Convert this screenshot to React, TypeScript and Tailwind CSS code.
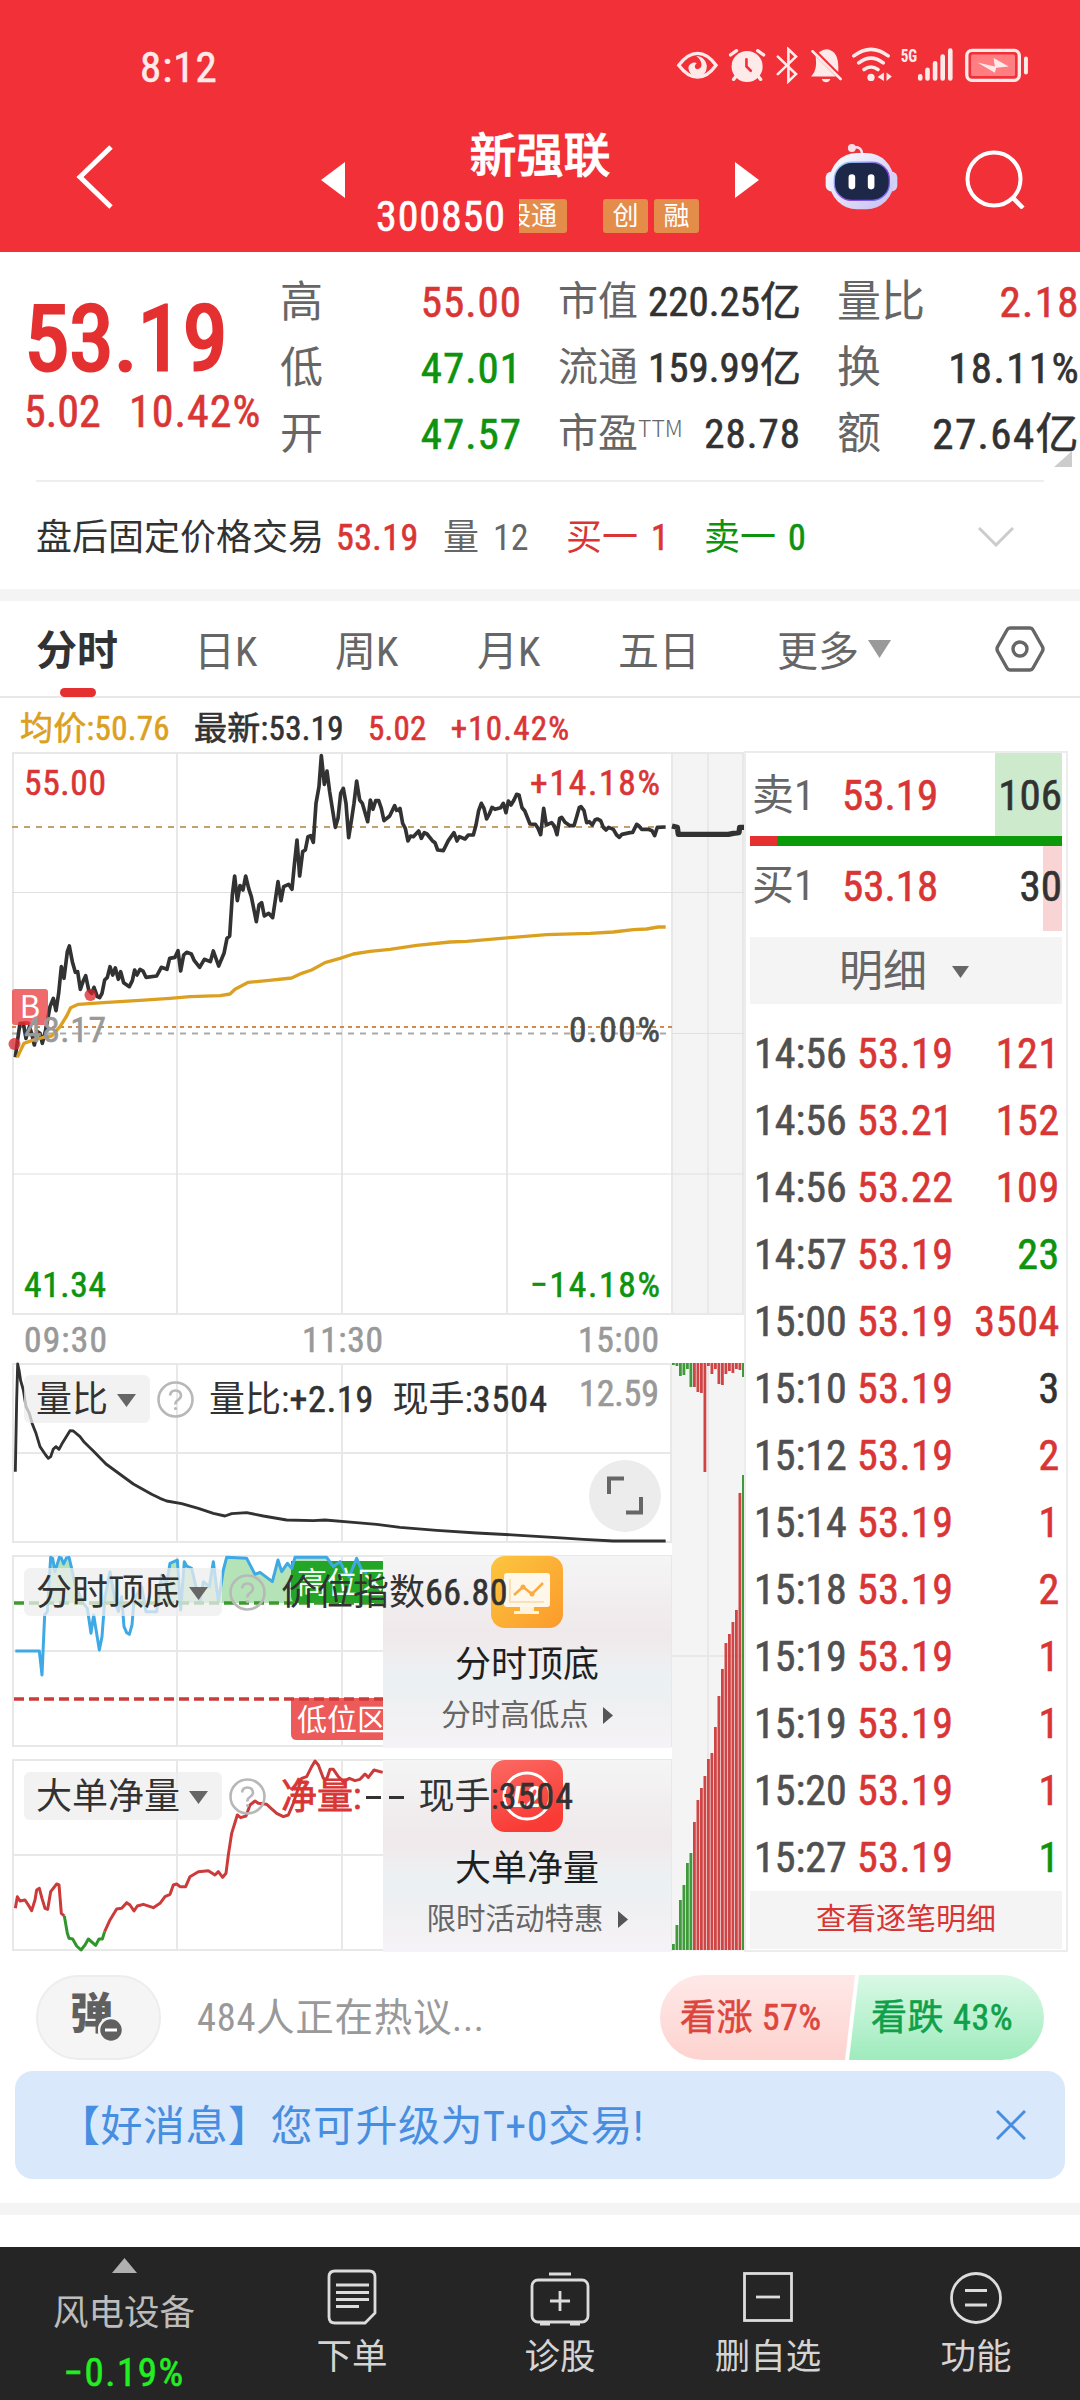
import type { ReactNode } from "react";

const STATS = [
  ["高", "55.00", "text-[#d93535]", "市值", "220.25亿", "量比", "2.18", "text-[#d93535]"],
  ["低", "47.01", "text-[#0d930d]", "流通", "159.99亿", "换", "18.11%", "text-[#323232]"],
  ["开", "47.57", "text-[#0d930d]", "市盈", "28.78", "额", "27.64亿", "text-[#323232]"],
];

const TRADES = [
  ["14:56", "53.19", "121", "r"],
  ["14:56", "53.21", "152", "r"],
  ["14:56", "53.22", "109", "r"],
  ["14:57", "53.19", "23", "g"],
  ["15:00", "53.19", "3504", "r"],
  ["15:10", "53.19", "3", "k"],
  ["15:12", "53.19", "2", "r"],
  ["15:14", "53.19", "1", "r"],
  ["15:18", "53.19", "2", "r"],
  ["15:19", "53.19", "1", "r"],
  ["15:19", "53.19", "1", "r"],
  ["15:20", "53.19", "1", "r"],
  ["15:27", "53.19", "1", "g"],
];

const QTY_COLOR: Record<string, string> = {
  r: "text-[#d93535]",
  g: "text-[#0d930d]",
  k: "text-[#323232]",
};

// Series are stored at 3x, each chart scales them down.
const PRICE_AM =
  "46,952 52,905 60,850 70,850 78,895 88,860 95,880 103,915 112,875 120,880 127,910 137,870 150,800 160,775 168,812 176,760 184,680 192,715 202,635 208,618 217,665 226,697 233,695 241,748 250,722 257,707 266,750 275,760 282,742 292,770 299,773 306,760 314,720 322,712 330,680 338,705 346,684 355,718 362,695 371,728 388,740 397,722 404,690 411,705 420,688 429,693 438,712 470,708 484,682 501,688 509,655 525,652 534,632 542,693 551,645 560,637 574,642 583,662 599,682 613,658 631,665 640,633 656,678 672,640 681,595 689,588 697,465 704,408 712,482 720,437 729,450 737,408 746,445 754,470 769,545 777,495 785,488 793,528 806,520 818,533 826,480 834,425 843,482 851,440 866,433 876,448 883,375 891,300 899,408 908,335 916,330 924,290 932,287 940,307 948,190 957,140 964,47 973,133 981,93 989,155 1006,262 1014,235 1022,160 1030,145 1038,190 1046,293 1056,230 1062,190 1070,123 1079,180 1087,190 1103,245 1111,180 1119,208 1127,182 1136,182 1144,205 1152,242 1169,228 1184,197 1192,215";
const PRICE_PM =
  "1192,215 1200,205 1208,250 1216,265 1224,303 1232,288 1240,290 1256,273 1264,295 1273,278 1281,282 1297,302 1305,308 1313,330 1330,332 1345,302 1362,278 1371,303 1378,290 1395,297 1405,285 1420,285 1428,255 1436,212 1444,190 1452,205 1460,237 1468,222 1476,202 1485,208 1502,203 1510,190 1518,218 1525,183 1533,195 1542,180 1550,163 1557,165 1566,203 1574,212 1590,252 1606,253 1614,265 1622,284 1631,205 1639,255 1655,248 1663,258 1671,284 1679,235 1685,232 1695,247 1710,257 1722,257 1730,230 1738,202 1743,200 1752,212 1760,248 1768,245 1777,255 1785,240 1792,237 1802,242 1810,262 1818,270 1826,262 1840,268 1850,285 1858,292 1866,283 1890,278 1898,277 1910,253 1917,258 1925,268 1945,268 1956,272 1964,287 1972,262 1997,261";
const AFTER_HOURS = "2016,258 2032,262 2035,283 2185,283 2200,280 2217,278 2219,262 2232,262";
const AVERAGE =
  "52,952 60,935 72,910 100,900 140,890 155,888 180,860 200,828 212,803 235,793 310,788 420,781 510,775 570,770 660,767 690,762 705,748 745,727 800,722 875,714 905,700 935,690 975,668 1020,655 1060,642 1110,634 1170,628 1250,616 1350,606 1400,604 1540,592 1640,584 1770,580 1840,576 1900,569 1940,567 1975,561 1997,561";
const RATIO =
  "46,365 50,150 53,42 57,60 62,92 70,120 78,170 88,190 97,222 108,250 120,290 137,315 145,325 152,320 160,297 168,290 177,298 185,283 210,242 220,243 240,260 253,277 280,303 318,342 400,402 455,433 480,445 500,453 545,461 595,475 640,490 675,498 695,491 740,488 790,498 860,510 940,512 975,510 1060,517 1130,523 1200,532 1310,541 1430,549 1560,556 1670,563 1750,568 1840,573 1997,573";
const INDEX =
  "46,333 118,333 126,405 134,225 142,215 152,52 158,55 165,95 178,52 184,54 191,72 199,54 207,52 215,85 225,135 250,190 262,205 273,280 281,225 298,330 306,290 315,170 330,95 345,180 355,215 365,170 372,260 380,278 388,283 396,255 402,180 410,165 425,140 438,215 470,215 485,105 500,130 510,70 532,60 542,210 553,65 560,78 575,85 590,150 600,182 610,125 628,140 640,65 655,185 670,90 680,52 740,55 765,103 780,97 817,125 834,60 845,95 862,70 875,85 885,52 980,52 1000,80 1020,65 1035,95 1048,110 1070,55 1085,90 1100,100";
const NET_A =
  "46,1105 52,1070 60,1083 75,1080 85,1095 95,1112 105,1080 110,1050 118,1045 126,1075 135,1105 143,1108 152,1055 170,1032 177,1035 184,1120 193,1128";
const NET_B = "193,1128 202,1180 207,1195 218,1197 230,1218 243,1230 255,1215 265,1197 287,1216 297,1197 307,1197 314,1175";
const NET_C =
  "314,1175 330,1140 350,1107 365,1105 380,1088 390,1095 402,1113 412,1098 430,1093 460,1103 480,1090 495,1070 510,1063 520,1035 530,1032 540,1040 557,1040 570,1010 595,995 625,992 645,1005 655,995 668,1012 678,1000 685,945 695,880 712,825 722,833 738,828 750,795 765,783 775,790 800,793 830,820 850,830 865,825 880,790 895,745 905,715 920,710 935,680 945,663 955,675 970,715 980,718 990,688 1000,688 1015,710 1030,725 1048,715 1065,722 1080,718 1095,702 1105,712 1122,690 1148,697";

const BARS_TOP = [2, 3, 13, 12, 6, 24, 24, 29, 30, 109, 3, 11, 6, 21, 22, 11, 8, 10, 6, 7, 14];
const BARS_BOTTOM = [6, 25, 50, 65, 87, 97, 128, 150, 162, 174, 191, 197, 223, 254, 281, 307, 316, 328, 340, 457, 475];

const NUM = "[-webkit-text-stroke:0.6px]";

function StatusBar() {
  return (
    <div className="flex h-[134px] items-center justify-between pr-[50px] pl-[140px] text-[#ffeaea]">
      <span className="text-[43px] leading-none tracking-[1px] [-webkit-text-stroke:0.6px]">8:12</span>
      <svg width="355" height="37" viewBox="46 33 1066 112" className="-mt-1" fill="none" stroke="#ffeaea" strokeWidth="10" strokeLinecap="round">
        <path d="M53 88 Q80 52 110 52 T166 88 Q140 124 110 124 T53 88Z" />
        <path d="M106 60 C126 74 128 100 108 100 C98 96 102 86 108 82 C98 76 84 84 82 96 C84 114 98 124 110 124 C130 122 138 108 138 90 C136 72 122 60 106 60Z" fill="#ffeaea" stroke="none" />
        <circle cx="260" cy="92" r="47" fill="#ffeaea" stroke="none" />
        <path d="M210 57 L228 44 M310 57 L292 44 M226 122 L219 131 M294 122 L301 131" />
        <path d="M258 70 V92 L271 105" stroke="#f13038" strokeWidth="8" />
        <path d="M353 62 L408 115 L385 137 V40 L408 62 L353 115" strokeWidth="8" />
        <path d="M480 50 Q498 36 514 46 Q536 56 534 104 L480 50 M470 66 L524 120 H458 Q474 104 470 66Z" fill="#ffeaea" strokeWidth="4" />
        <path d="M458 46 L543 130" strokeWidth="8" />
        <path d="M486 130 H512 Q508 140 499 140 Q490 140 486 130Z" fill="#ffeaea" stroke="none" />
        <path d="M583 60 Q635 20 687 60 M598 81 Q635 52 672 81 M614 101 Q635 86 656 101" strokeWidth="11" />
        <circle cx="635" cy="125" r="11" fill="#ffeaea" stroke="none" />
        <path d="M655 124 L674 110 V136Z M682 110 L698 122 L682 136Z" fill="#ffeaea" stroke="none" />
        <text x="725" y="79" fontSize="58" fontWeight="700" textLength="50" lengthAdjust="spacingAndGlyphs" fill="#ffeaea" stroke="none">5G</text>
        <path d="M784 122 V128 M806 102 V128 M829 82 V128 M852 62 V128 M875 44 V128" strokeWidth="14" />
        <rect x="925" y="43" width="159" height="91" rx="16" />
        <rect x="938" y="56" width="133" height="65" rx="5" fill="#ff7e82" stroke="none" />
        <path d="M957 80 L1010 92 L1006 66 L1052 92 L1014 96 L1010 111Z" fill="#ffeaea" stroke="none" />
        <path d="M1104 68 V110" strokeWidth="12" />
      </svg>
    </div>
  );
}

function Robot() {
  return (
    <svg width="73" height="67" viewBox="494 322 218 202" className="mt-[9px] ml-[66px]">
      <defs>
        <linearGradient id="shell" x1="0" y1="0" x2="1" y2="1">
          <stop offset="0" stopColor="#ffffff" />
          <stop offset="1" stopColor="#c3bdf3" />
        </linearGradient>
        <linearGradient id="rim" x1="0" y1="0" x2="1" y2="1">
          <stop offset="0" stopColor="#8fe3f5" />
          <stop offset="0.6" stopColor="#8a3fe0" />
          <stop offset="1" stopColor="#6c7bf0" />
        </linearGradient>
      </defs>
      <path d="M574 337 Q604 328 605 358" fill="none" stroke="#f3ddf0" strokeWidth="8" />
      <circle cx="574" cy="337" r="12" fill="#f7dfe9" />
      <rect x="495" y="408" width="40" height="60" rx="18" fill="#eef0fb" />
      <rect x="671" y="408" width="40" height="60" rx="18" fill="#d5d0f5" />
      <rect x="507" y="352" width="193" height="170" rx="82" fill="url(#shell)" />
      <rect x="521" y="380" width="166" height="115" rx="52" fill="#1d2747" stroke="url(#rim)" strokeWidth="4" />
      <rect x="564" y="416" width="20" height="46" rx="10" fill="#fff" />
      <rect x="622" y="416" width="20" height="46" rx="10" fill="#fff" />
    </svg>
  );
}

function Header() {
  return (
    <header className="h-[252px] bg-[#f13038] text-white">
      <StatusBar />
      <div className="flex h-[118px] items-start pl-[76px]">
        <svg width="37" height="64" viewBox="0 0 37 64" className="mt-[11px]" fill="none" stroke="#fff" strokeWidth="5">
          <path d="M35 2 L4 32 L35 62" />
        </svg>
        <svg width="24" height="36" viewBox="0 0 24 36" className="mt-[28px] ml-[208px]">
          <path d="M24 0 V36 L0 18Z" fill="#fff" />
        </svg>
        <div className="w-[390px]">
          <h1 className="-mt-[2px] text-center text-[47px] leading-[48px] font-medium [-webkit-text-stroke:0.8px]">新强联</h1>
          <div className="mt-[19px] flex h-[34px] items-center pl-[31px]">
            <span className={`w-[143px] pt-[2px] text-[42px] leading-none tracking-[0.9px] ${NUM}`}>300850</span>
            <span className="flex h-[34px] w-[48px] justify-end overflow-hidden rounded-r-[3px] bg-[#e48c4a] pr-[10px] text-[26px] leading-[34px] whitespace-nowrap">股通</span>
            <span className="ml-[36px] h-[34px] w-[45px] rounded-[3px] bg-[#e48c4a] text-center text-[26px] leading-[34px]">创</span>
            <span className="ml-[6px] h-[34px] w-[45px] rounded-[3px] bg-[#e48c4a] text-center text-[26px] leading-[34px]">融</span>
          </div>
        </div>
        <svg width="24" height="36" viewBox="0 0 24 36" className="mt-[28px]">
          <path d="M0 0 V36 L24 18Z" fill="#fff" />
        </svg>
        <Robot />
        <svg width="60" height="60" viewBox="0 0 60 60" className="mt-[15px] ml-[67px]" fill="none" stroke="#fff" strokeWidth="4">
          <circle cx="29" cy="30" r="26.500" />
          <path d="M47 48 L58 59" strokeWidth="4.500" />
        </svg>
      </div>
    </header>
  );
}

function Quote() {
  return (
    <section className="relative flex h-[228px] text-[#d93535]">
      <div className="w-[280px] shrink-0 pt-[41px] pl-[24px]">
        <div className="text-[91px] leading-[92px] text-[#e43030] [-webkit-text-stroke:3px]">53.19</div>
        <div className={`mt-[5px] flex text-[44px] leading-[44px] ${NUM}`}>
          <span className="w-[105px]">5.02</span>
          <span className="tracking-[1px]">10.42%</span>
        </div>
      </div>
      <div className="w-[800px] pt-[17px]">
        {STATS.map(([a, av, ac, b, bv, c, cv, cc]) => (
          <div key={a} className="flex h-[66px] items-center text-[43px] leading-none whitespace-nowrap">
            <span className="text-[#666]">{a}</span>
            <span className={`ml-auto tracking-[1px] ${NUM} ${ac}`}>{av}</span>
            <span className="ml-[36px] flex w-[243px] items-center text-[40px] text-[#666]">
              {b}
              {b === "市盈" && <span className="-mt-[14px] font-['Noto_Sans_CJK_SC'] text-[23px] font-light">TTM</span>}
              <span className={`ml-auto text-[41px] text-[#323232] ${b === "市盈" ? "tracking-[1px]" : ""} ${NUM}`}>{bv}</span>
            </span>
            <span className="ml-[36px] w-[100px] text-[44px] text-[#666]">{c}</span>
            <span className={`flex w-[143px] justify-end tracking-[1.4px] ${NUM} ${cc}`}>{cv}</span>
          </div>
        ))}
      </div>
      <svg width="18" height="16" viewBox="0 0 18 16" className="absolute top-[199px] right-[8px]">
        <path d="M18 0 V16 H0Z" fill="#ccc" />
      </svg>
    </section>
  );
}

function AfterHours() {
  return (
    <section className="mx-[36px] flex h-[109px] items-center border-t-2 border-[#eee] pt-[5px] text-[36px] leading-none">
      <span className="w-[300px] text-[#323232]">盘后固定价格交易</span>
      <span className={`w-[107px] tracking-[0.4px] text-[#d93535] ${NUM}`}>53.19</span>
      <span className="w-[50px] text-[#666]">量</span>
      <span className="w-[73px] text-[#666]">12</span>
      <span className="w-[85px] text-[#d93535]">买一</span>
      <span className={`w-[53px] text-[#d93535] ${NUM}`}>1</span>
      <span className="w-[84px] text-[#0d930d]">卖一</span>
      <span className={`text-[#0d930d] ${NUM}`}>0</span>
      <svg width="36" height="20" viewBox="0 0 36 20" className="mr-[30px] -mt-[3px] ml-auto" fill="none" stroke="#ccc" strokeWidth="3">
        <path d="M1 1 L18 18 L35 1" />
      </svg>
    </section>
  );
}

function Tabs() {
  return (
    <nav className="flex h-[97px] items-start border-b-2 border-[#e8e8e8] pl-[36px] text-[41px] leading-none text-[#666]">
      <div className="w-[158px]">
        <div className="mt-[30px] font-bold text-[#323232]">分时</div>
        <div className="mt-[16px] ml-[24px] h-[9px] w-[36px] rounded-full bg-[#e43030]" />
      </div>
      <span className="mt-[31px] w-[141px]">日K</span>
      <span className="mt-[31px] w-[142px]">周K</span>
      <span className="mt-[31px] w-[141px]">月K</span>
      <span className="mt-[31px] w-[159px]">五日</span>
      <span className="mt-[31px] w-[91px]">更多</span>
      <svg width="23" height="18" viewBox="0 0 23 18" className="mt-[39px]">
        <path d="M0 0 H23 L11.500 18Z" fill="#999" />
      </svg>
      <svg width="50" height="50" viewBox="0 0 50 50" className="mt-[23px] ml-[104px]" fill="none" stroke="#666" strokeWidth="3.400" strokeLinejoin="round">
        <path d="M15 4 H35 Q37 4 38 6 L47 22 Q49 25 47 28 L38 44 Q37 46 35 46 H15 Q13 46 12 44 L3 28 Q1 25 3 22 L12 6 Q13 4 15 4Z" />
        <circle cx="25" cy="25" r="7" />
      </svg>
    </nav>
  );
}

function Legend() {
  return (
    <div className={`flex h-[52px] items-center gap-[24px] pt-[8px] pl-[20px] text-[33px] leading-none tracking-[0.3px] text-[#d93535] ${NUM}`}>
      <span className="text-[#dca020]">均价:50.76</span>
      <span className="text-[#323232]">最新:53.19</span>
      <span>5.02</span>
      <span className="tracking-[1.2px]">+10.42%</span>
    </div>
  );
}

const VERTICALS = [13, 177, 342, 507];

function PriceChart() {
  return (
    <svg width="745" height="610" viewBox="0 0 745 610" className="block">
      <rect x="671" y="3" width="73" height="562" fill="#f4f4f4" />
      <g stroke="#e8e8e8" strokeWidth="2">
        {VERTICALS.map((x) => (
          <path key={x} d={`M${x} 3 V565`} />
        ))}
        <path d="M672 3 V565 M708 3 V565 M743 3 V565 M12 3 H744 M12 564 H744" />
        <path d="M12 142.500 H744 M12 424 H744 M672 283.500 H744" stroke="#e0e0e0" strokeWidth="1.200" />
      </g>
      <path d="M12 77 H664" stroke="#c4a06c" strokeWidth="2" strokeDasharray="6 6" />
      <path d="M12 277 H672" stroke="#d08a4a" strokeWidth="2" strokeDasharray="4 4" />
      <path d="M12 283.500 H666" stroke="#aaa" strokeWidth="2" strokeDasharray="6 6" />
      <g fill="none" strokeLinejoin="round" transform="translate(0 -10) scale(.33333)">
        <polyline points={PRICE_AM} stroke="#323232" strokeWidth="11" />
        <polyline points={PRICE_PM} stroke="#323232" strokeWidth="11" />
        <polyline points={AFTER_HOURS} stroke="#323232" strokeWidth="16" />
        <polyline points={AVERAGE} stroke="#dca020" strokeWidth="10" />
      </g>
      <rect x="12" y="239" width="36" height="36" rx="3" fill="#e93a3a" opacity="0.75" />
      <text x="30" y="268" fontSize="31" textAnchor="middle" fill="#fff" className="font-['Noto_Sans_CJK_SC']">B</text>
      <g fill="#d9222b" opacity="0.75">
        <circle cx="14.500" cy="294" r="6" />
        <circle cx="90.500" cy="245" r="6" />
        <path d="M20 275 Q26 267 33 275Z" />
      </g>
      <g fontSize="35.500" strokeWidth="0.600">
        <text x="24" y="45" textLength="82" fill="#d93535" stroke="#d93535">55.00</text>
        <text x="530" y="45" textLength="130" fill="#d93535" stroke="#d93535">+14.18%</text>
        <text x="24" y="292" textLength="82" fill="#999" stroke="#999">48.17</text>
        <text x="569" y="292" textLength="91" fill="#4a4a4a" stroke="#4a4a4a">0.00%</text>
        <text x="24" y="547" textLength="82" fill="#0d930d" stroke="#0d930d">41.34</text>
        <text x="530" y="547" textLength="130" fill="#0d930d" stroke="#0d930d">−14.18%</text>
        <text x="24" y="602" textLength="83" fill="#999" stroke="#999">09:30</text>
        <text x="302" y="602" textLength="81" fill="#999" stroke="#999">11:30</text>
        <text x="578" y="602" textLength="81" fill="#999" stroke="#999">15:00</text>
      </g>
    </svg>
  );
}

function Grid({ top, mid, bottom }: { top: number; mid: number; bottom: number }) {
  return (
    <g stroke="#e8e8e8" strokeWidth="2">
      {VERTICALS.map((x) => (
        <path key={x} d={`M${x} ${top} V${bottom}`} />
      ))}
      <path d={`M12 ${top} H672 M12 ${mid} H672 M12 ${bottom} H672 M671 ${top} V${bottom}`} />
    </g>
  );
}

function PanelLabel({ name, children }: { name: string; children: ReactNode }) {
  return (
    <div className="absolute top-[15px] left-[24px] flex items-center text-[36px] leading-none whitespace-nowrap text-[#323232]">
      <div className="flex h-[48px] items-center gap-[9px] rounded-[6px] bg-[#eee]/75 pt-[2px] pr-[14px] pl-[12px]">
        {name}
        <svg width="19" height="13" viewBox="0 0 19 13">
          <path d="M0 0 H19 L9.500 13Z" fill="#666" />
        </svg>
      </div>
      <svg width="37" height="37" viewBox="0 0 37 37" className="mr-[15px] ml-[7px]" fill="none" stroke="#b8b8b8" strokeWidth="2.600">
        <circle cx="18.500" cy="18.500" r="17" />
        <path d="M13 14.500 Q13.500 9.500 18.500 9.500 T24 14.500 Q24 17 21 19 T18.500 23.500" />
        <circle cx="18.500" cy="27.500" r="1" fill="#b8b8b8" strokeWidth="1.200" />
      </svg>
      <div className="flex items-center pt-[2px]">{children}</div>
    </div>
  );
}

function Promo({ title, sub, top, children }: { title: string; sub: string; top: string; children: ReactNode }) {
  return (
    <div
      className={`absolute left-[383px] flex h-[192px] w-[288px] flex-col items-center bg-linear-to-b from-[#f5f5f6] via-[#efe9eb] via-40% to-[#f5f3f7] ${top}`}
    >
      <div className="absolute inset-0 bg-linear-to-b from-transparent from-45% via-[#ebf1f3] via-65% to-transparent to-90%" />
      <svg width="72" height="72" viewBox="0 0 72 72" className="relative -ml-px">
        {children}
      </svg>
      <div className="relative mt-[19px] text-[36px] leading-[36px] text-[#1f1f1f]">{title}</div>
      <div className="relative mt-[16px] flex items-center gap-[14px] text-[29.500px] leading-[32px] text-[#666]">
        {sub}
        <svg width="10" height="17" viewBox="0 0 10 17">
          <path d="M0 0 L10 8.500 L0 17Z" fill="#555" />
        </svg>
      </div>
    </div>
  );
}

function RatioPanel() {
  return (
    <div className="relative h-[193px]">
      <svg width="672" height="193" viewBox="0 0 672 193" className="block">
        <Grid top={4} mid={93} bottom={182} />
        <polyline points={RATIO} transform="translate(0 -10) scale(.33333)" fill="none" stroke="#323232" strokeWidth="8.500" strokeLinejoin="round" />
        <circle cx="625" cy="136" r="36" fill="#ececec" />
        <path d="M609 134 V118.500 H624 M626 152.500 H641 V137" fill="none" stroke="#666" strokeWidth="4" />
        <text x="579" y="46" fontSize="36" textLength="80" fill="#999" stroke="#999" strokeWidth="0.600">12.59</text>
      </svg>
      <PanelLabel name="量比">
        <span>量比:</span>
        <span className={`w-[103px] tracking-[0.8px] ${NUM}`}>+2.19</span>
        <span>现手:</span>
        <span className={`tracking-[1px] ${NUM}`}>3504</span>
      </PanelLabel>
    </div>
  );
}

function TopBottomPanel() {
  return (
    <div className="relative h-[204px]">
      <svg width="672" height="204" viewBox="0 0 672 204" className="block">
        <defs>
          <clipPath id="above-high">
            <rect x="0" y="0" width="383" height="50" />
          </clipPath>
          <clipPath id="left-part">
            <rect x="0" y="0" width="383" height="204" />
          </clipPath>
        </defs>
        <Grid top={3} mid={98} bottom={193} />
        <g clipPath="url(#above-high)">
          <polygon points={`46,189 ${INDEX} 1100,189`} transform="translate(0 -13) scale(.33333)" fill="#b5e3b8" />
        </g>
        <g clipPath="url(#left-part)">
          <path d="M291 8 H383 V50 H298 Q291 50 291 43Z" fill="#23a527" />
          <polyline points={INDEX} transform="translate(0 -13) scale(.33333)" fill="none" stroke="#3fa9e6" strokeWidth="9" strokeLinejoin="round" />
          <path d="M14 50 H383" stroke="#3f9a2c" strokeWidth="3.500" strokeDasharray="10 5" />
          <path d="M291 145 H390 V187 H297 Q291 187 291 181Z" fill="#ec5a5a" />
          <path d="M14 146 H383" stroke="#cc3a3a" strokeWidth="3.500" strokeDasharray="10 5" />
          <text x="297" y="40" fontSize="30" fill="#f4fff4">高位区</text>
          <text x="297" y="177" fontSize="30" fill="#fff">低位区</text>
        </g>
      </svg>
      <Promo title="分时顶底" sub="分时高低点" top="top-[3px]">
        <defs>
          <linearGradient id="orange" x1="0" y1="0" x2="1" y2="1">
            <stop offset="0" stopColor="#fcc63f" />
            <stop offset="1" stopColor="#fb9a2b" />
          </linearGradient>
        </defs>
        <rect width="72" height="72" rx="14" fill="url(#orange)" />
        <rect x="13" y="17" width="46" height="34" rx="3" fill="#fff8ea" />
        <path d="M29 51 H43 V55 H48 V58 H23 V55 H29Z" fill="#fff3dc" />
        <path d="M19 23 V46 H53" fill="none" stroke="#f9d9a8" strokeWidth="1.500" />
        <path d="M23 39 L32 31 L41 38 L52 27" fill="none" stroke="#fbab3f" strokeWidth="2.500" />
        <circle cx="32" cy="31" r="2.500" fill="#fbab3f" />
        <circle cx="41" cy="38" r="2.500" fill="#fbab3f" />
      </Promo>
      <PanelLabel name="分时顶底">
        <span>价位指数</span>
        <span className={`tracking-[0.5px] ${NUM}`}>66.80</span>
      </PanelLabel>
    </div>
  );
}

function NetPanel() {
  return (
    <div className="relative h-[195px]">
      <svg width="672" height="195" viewBox="0 0 672 195" className="block">
        <Grid top={3} mid={98} bottom={193} />
        <g fill="none" strokeWidth="9" strokeLinejoin="round" transform="translate(0 -217) scale(.33333)">
          <polyline points={NET_A} stroke="#cc3a3a" />
          <polyline points={NET_B} stroke="#2f962b" />
          <polyline points={NET_C} stroke="#cc3a3a" />
        </g>
      </svg>
      <Promo title="大单净量" sub="限时活动特惠" top="top-[3px]">
        <defs>
          <linearGradient id="red" x1="0" y1="0" x2="0.400" y2="1">
            <stop offset="0" stopColor="#fb6a63" />
            <stop offset="1" stopColor="#f93a35" />
          </linearGradient>
        </defs>
        <rect width="72" height="72" rx="14" fill="url(#red)" />
        <circle cx="36" cy="36" r="23" fill="none" stroke="#fff" strokeWidth="3" />
        <text x="36" y="47" fontSize="30" fontWeight="700" fontStyle="italic" textAnchor="middle" fill="#fff">L2</text>
      </Promo>
      <PanelLabel name="大单净量">
        <span className="text-[#d93535] [-webkit-text-stroke:0.8px]">净量:</span>
        <span className="flex w-[57px] gap-[8px] pl-[5px]">
          <i className="h-[3px] w-[15px] bg-[#323232]" />
          <i className="h-[3px] w-[15px] bg-[#323232]" />
        </span>
        <span>现手:</span>
        <span className={`tracking-[1px] ${NUM}`}>3504</span>
      </PanelLabel>
    </div>
  );
}

function barColor(i: number) {
  return i < 6 || i === 20 ? "#3f9a3a" : "#cf4444";
}

function AfterHoursBars() {
  return (
    <svg width="73" height="592" viewBox="0 0 73 592" className="block shrink-0">
      <rect y="3" width="73" height="588" fill="#f4f4f4" />
      <path d="M36 3 V591 M0 296 H73" stroke="#e4e4e4" strokeWidth="1.500" />
      {BARS_TOP.map((h, i) => (
        <rect key={i} x={i * 3.5} y="3" width="2.800" height={h} fill={barColor(i)} />
      ))}
      {BARS_BOTTOM.map((h, i) => (
        <rect key={i} x={i * 3.5} y={590 - h} width="2.800" height={h} fill={barColor(i)} />
      ))}
    </svg>
  );
}

function OrderPanel() {
  return (
    <aside className={`mt-px -ml-px h-[1201px] w-[324px] border-2 border-[#ececec] pr-[4px] pl-[4px] text-[42px] leading-none text-[#d93535] ${NUM}`}>
      <div className="flex h-[83px] items-center pl-[2px]">
        <span className="w-[90px] pt-[2px] text-[42px] text-[#666] [-webkit-text-stroke:0]">卖1</span>
        <span className="pt-[2px] text-[43px]">53.19</span>
        <span className="ml-auto flex h-[83px] w-[67px] items-center justify-end bg-[#cdeacd] pt-[2px] text-[43px] text-[#323232]">106</span>
      </div>
      <div className="flex h-[10px] bg-[#0a9a0a]">
        <div className="w-[27px] bg-[#e43030]" />
      </div>
      <div className="flex h-[85px] items-start pl-[2px]">
        <span className="mt-[19px] w-[90px] text-[42px] text-[#666] [-webkit-text-stroke:0]">买1</span>
        <span className="mt-[19px] text-[43px]">53.18</span>
        <span className="ml-auto flex h-[85px] w-[19px] justify-end bg-[#f9d4d4] pt-[19px] text-[43px] text-[#323232]">30</span>
      </div>
      <div className="mt-[6px] flex h-[67px] items-center justify-center gap-[25px] bg-[#f4f4f4] pt-[3px] pr-[4px] text-[44px] text-[#666] [-webkit-text-stroke:0]">
        明细
        <svg width="17" height="12" viewBox="0 0 17 12">
          <path d="M0 0 H17 L8.500 12Z" fill="#666" />
        </svg>
      </div>
      <div className="mt-[16px]">
        {TRADES.map(([time, price, qty, c], i) => (
          <div key={i} className="flex h-[67px] items-center pr-[2px] pl-[4px]">
            <span className="w-[103px] text-[#505050]">{time}</span>
            <span className="tracking-[0.5px]">{price}</span>
            <span className={`ml-auto tracking-[0.7px] ${QTY_COLOR[c]}`}>{qty}</span>
          </div>
        ))}
      </div>
      <div className="h-[58px] bg-[#f4f4f4] text-center text-[30px] leading-[56px] [-webkit-text-stroke:0]">查看逐笔明细</div>
    </aside>
  );
}

function Discussion() {
  return (
    <div className="mt-[23px] flex h-[85px] items-center pr-[36px] pl-[36px] text-[36px] leading-none">
      <div className="relative flex h-[85px] w-[125px] items-center rounded-full border-2 border-[#ededed] bg-[#f5f5f5] pb-[6px] pl-[32px] text-[43px] font-black text-[#606060]">
        弹
        <svg width="26" height="26" viewBox="0 0 26 26" className="absolute top-[40px] left-[60px]">
          <circle cx="13" cy="13" r="12" fill="#606060" stroke="#f5f5f5" strokeWidth="2.500" />
          <path d="M7 13 H19" stroke="#fff" strokeWidth="3" />
        </svg>
      </div>
      <span className="ml-[36px] pt-[2px] text-[38.500px] tracking-[0.7px] text-[#999]">484人正在热议...</span>
      <div className={`ml-auto flex h-[85px] w-[195px] items-center rounded-l-full bg-linear-to-b from-[#fee9e8] to-[#fdd3cf] pl-[20px] tracking-[0.5px] text-[#dd463c] [clip-path:polygon(0_0,100%_0,185px_100%,0_100%)] ${NUM}`}>
        看涨 57%
      </div>
      <div className={`-ml-[6px] flex h-[85px] w-[195px] items-center rounded-r-full bg-linear-to-b from-[#d9f9e6] to-[#9eebbd] pl-[22px] tracking-[0.6px] text-[#10a04a] [clip-path:polygon(10px_0,100%_0,100%_100%,0_100%)] ${NUM}`}>
        看跌 43%
      </div>
    </div>
  );
}

function Banner() {
  return (
    <div className="mx-[15px] mt-[11px] flex h-[108px] items-center justify-between rounded-[18px] bg-[#d9e8fb] pr-[39px] pl-[43px] text-[42px] leading-none text-[#488ee0]">
      <span className="pt-[4px] tracking-[0.5px]">【好消息】您可升级为T+0交易!</span>
      <svg width="30" height="30" viewBox="0 0 30 30" stroke="#488ee0" strokeWidth="3">
        <path d="M1 1 L29 29 M29 1 L1 29" />
      </svg>
    </div>
  );
}

function NavItem({ label, children }: { label: string; children: ReactNode }) {
  return (
    <div className="flex w-[208px] flex-col items-center">
      <svg width="60" height="60" viewBox="0 0 60 60" className="mt-[20px]" fill="none" stroke="#dcdcdc" strokeWidth="2.800">
        {children}
      </svg>
      <span className="mt-[12px]">{label}</span>
    </div>
  );
}

function BottomNav() {
  return (
    <footer className="mt-[32px] flex h-[153px] bg-[#252525] text-[35.500px] leading-[36px] text-[#d4d4d4]">
      <div className="flex w-[248px] flex-col items-center">
        <svg width="25" height="15" viewBox="0 0 25 15" className="mt-[11px]">
          <path d="M12.500 0 L25 15 H0Z" fill="#b0b0b0" />
        </svg>
        <span className="mt-[22px] text-[#bcbcbc]">风电设备</span>
        <span className={`mt-[24px] text-[39px] tracking-[1.5px] text-[#22ee22] ${NUM}`}>−0.19%</span>
      </div>
      <NavItem label="下单">
        <path d="M13 4 H47 Q53 4 53 10 V46 L43 56 H13 Q7 56 7 50 V10 Q7 4 13 4Z" />
        <path d="M14 18 H47 M14 25.500 H47 M14 32.500 H47 M14 39.500 H37" />
      </NavItem>
      <NavItem label="诊股">
        <rect x="2" y="13" width="56" height="42" rx="6" />
        <path d="M19 7 H41 M30 24 V44 M20 34 H40 M10 57 H20 M40 57 H50" />
      </NavItem>
      <NavItem label="删自选">
        <rect x="6.500" y="6.500" width="47" height="47" />
        <path d="M18 30 H42" />
      </NavItem>
      <NavItem label="功能">
        <circle cx="30" cy="31" r="24.500" />
        <path d="M19 23.500 H41 M19 38 H41" />
      </NavItem>
    </footer>
  );
}

export default function App() {
  return (
    <div className="h-[2400px] w-[1080px] overflow-hidden bg-white font-['Roboto_Condensed','Noto_Sans_CJK_SC',sans-serif]">
      <Header />
      <Quote />
      <AfterHours />
      <div className="h-[12px] bg-[#f4f4f4]" />
      <Tabs />
      <Legend />
      <div className="flex">
        <div className="w-[745px] shrink-0">
          <PriceChart />
          <div className="flex">
            <div className="w-[672px] shrink-0">
              <RatioPanel />
              <TopBottomPanel />
              <NetPanel />
            </div>
            <AfterHoursBars />
          </div>
        </div>
        <OrderPanel />
      </div>
      <Discussion />
      <Banner />
      <div className="mt-[24px] h-[12px] bg-[#f4f4f4]" />
      <BottomNav />
    </div>
  );
}
